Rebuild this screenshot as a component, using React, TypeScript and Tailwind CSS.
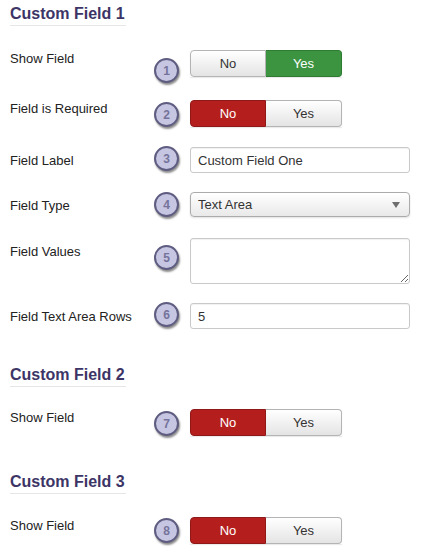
import React from "react";

type Choice = "yes" | "no";

const Badge: React.FC<{ n: number; top: number }> = ({ n, top }) => (
  <span
    className="absolute left-[144px] flex h-[25px] w-[25px] items-center justify-center rounded-full border-2 border-[#5e5c80] bg-[#c6c6e2] text-[12px] font-bold leading-none text-[#75739b] shadow-[1px_2px_2px_rgba(0,0,0,0.45)]"
    style={{ top }}
  >
    {n}
  </span>
);

const Toggle: React.FC<{ value: Choice }> = ({ value }) => {
  const off =
    "bg-gradient-to-b from-white to-[#e4e4e4] border-[#b4b4b4] text-[#333]";
  const no = value === "no" ? "bg-[#b41f1e] border-[#8f1918] text-white" : off;
  const yes = value === "yes" ? "bg-[#3c9441] border-[#2f7b34] text-white" : off;
  return (
    <div className="flex h-[27px] w-[152px] shadow-[0_1px_1px_rgba(0,0,0,0.08)]">
      <span
        className={`flex w-[76px] items-center justify-center rounded-l-[4px] border text-[13px] ${no}`}
      >
        No
      </span>
      <span
        className={`flex w-[76px] items-center justify-center rounded-r-[4px] border border-l-0 text-[13px] ${yes}`}
      >
        Yes
      </span>
    </div>
  );
};

const Title: React.FC<{ children: React.ReactNode; className?: string }> = ({
  children,
  className = "",
}) => (
  <h2
    className={`w-fit border-b border-[#e6e6e6] pb-px pr-px text-[16px] font-bold leading-[20px] text-[#3c3566] ${className}`}
  >
    {children}
  </h2>
);

const Row: React.FC<{
  label: string;
  badge: number;
  badgeTop: number;
  pad?: boolean;
  className?: string;
  children: React.ReactNode;
}> = ({ label, badge, badgeTop, pad, className = "", children }) => (
  <div className={`relative flex items-start ${className}`}>
    <label
      className={`w-[180px] text-[13px] leading-[18px] text-[#222] ${pad ? "pt-[5px]" : ""}`}
    >
      {label}
    </label>
    {children}
    <Badge n={badge} top={badgeTop} />
  </div>
);

const inputCls =
  "h-[26px] w-[220px] rounded-[3px] border border-[#c9c9c9] bg-white px-[7px] text-[13px] text-[#333] shadow-[inset_0_1px_1px_rgba(0,0,0,0.06)] outline-none";

export default function App() {
  return (
    <div
      className="min-h-screen bg-white px-[10px] pt-[4px]"
      style={{ fontFamily: '"Liberation Sans", Arial, sans-serif' }}
    >
      <Title>Custom Field 1</Title>

      <Row label="Show Field" badge={1} badgeTop={8} className="mt-[24px]">
        <Toggle value="yes" />
      </Row>

      <Row label="Field is Required" badge={2} badgeTop={2} className="mt-[23px]">
        <Toggle value="no" />
      </Row>

      <Row label="Field Label" badge={3} badgeTop={-1} pad className="mt-[20px]">
        <input className={inputCls} defaultValue="Custom Field One" readOnly />
      </Row>

      <Row label="Field Type" badge={4} badgeTop={0} pad className="mt-[19px]">
        <div className="flex h-[25px] w-[220px] items-center justify-between rounded-[4px] border border-[#ababab] bg-gradient-to-b from-white to-[#e9e9e9] pl-[7px] pr-[9px] text-[13px] text-[#333] shadow-[0_1px_2px_rgba(0,0,0,0.12)]">
          <span>Text Area</span>
          <svg width="8" height="6" viewBox="0 0 8 6">
            <path d="M0 0h8L4 6z" fill="#6e6e6e" />
          </svg>
        </div>
      </Row>

      <Row label="Field Values" badge={5} badgeTop={7} pad className="mt-[21px]">
        <textarea
          className="h-[46px] w-[220px] rounded-[3px] border border-[#c9c9c9] bg-white px-[7px] text-[13px] shadow-[inset_0_1px_1px_rgba(0,0,0,0.06)] outline-none"
          readOnly
        />
      </Row>

      <Row label="Field Text Area Rows" badge={6} badgeTop={-1} pad className="mt-[19px]">
        <input className={inputCls} defaultValue="5" readOnly />
      </Row>

      <Title className="mt-[36px]">Custom Field 2</Title>

      <Row label="Show Field" badge={7} badgeTop={2} className="mt-[22px]">
        <Toggle value="no" />
      </Row>

      <Title className="mt-[36px]">Custom Field 3</Title>

      <Row label="Show Field" badge={8} badgeTop={1} className="mt-[23px]">
        <Toggle value="no" />
      </Row>
    </div>
  );
}
